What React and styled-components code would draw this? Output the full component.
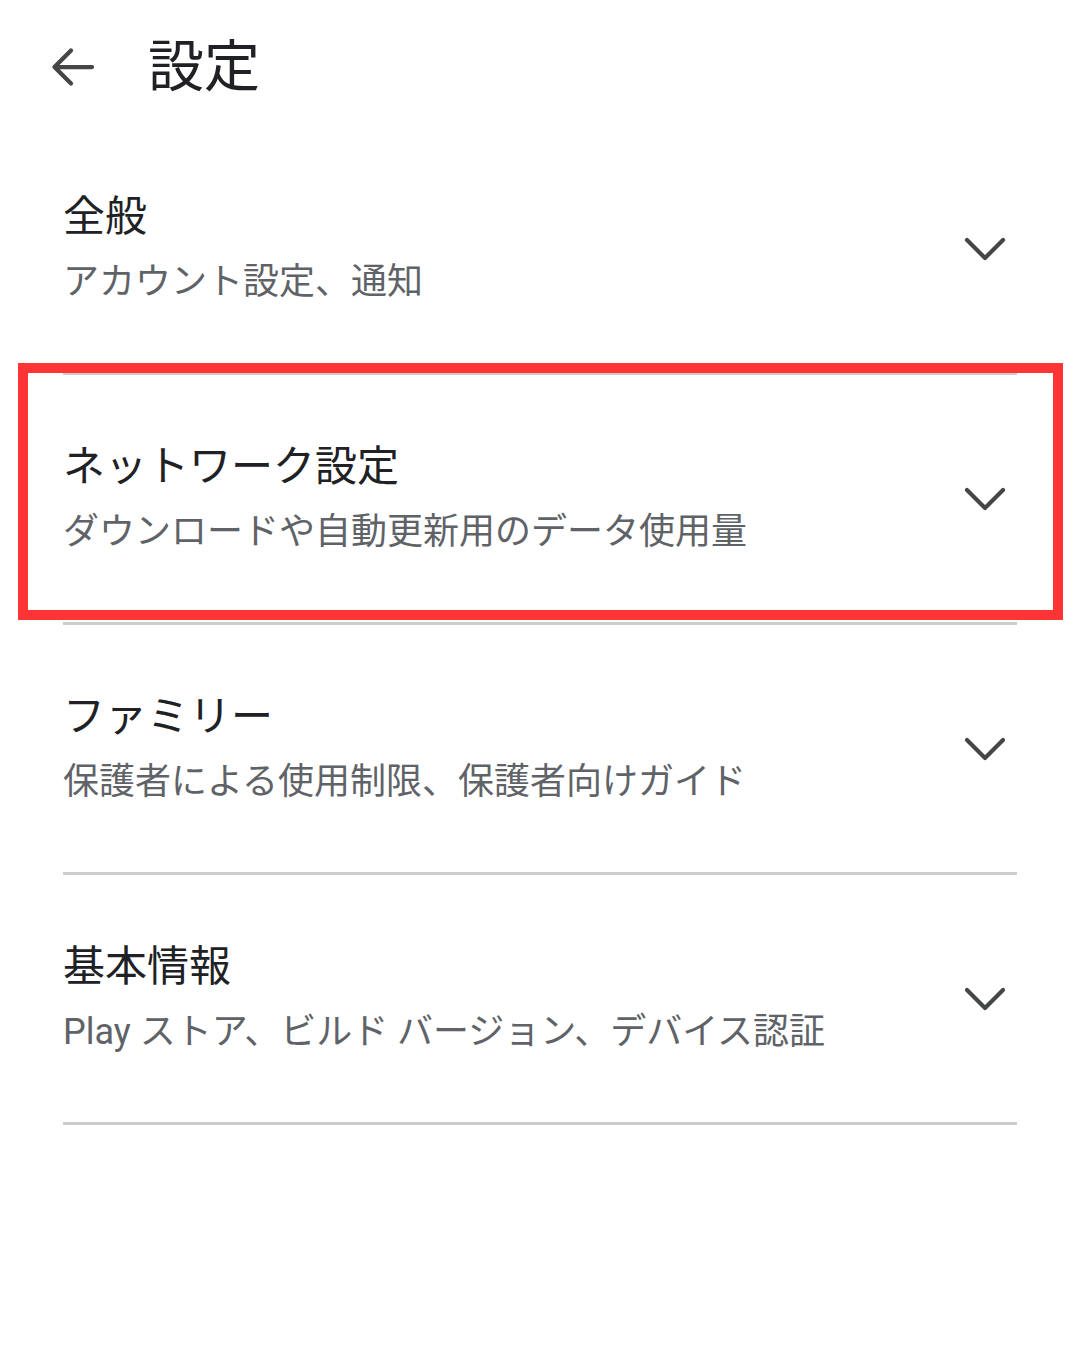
import React from 'react';
import styled, { createGlobalStyle } from 'styled-components';

const GlobalStyle = createGlobalStyle`
  html, body {
    margin: 0;
    padding: 0;
    background: #ffffff;
  }
  body {
    font-family: Roboto, "Noto Sans CJK JP", sans-serif;
    -webkit-font-smoothing: antialiased;
  }
`;

const Page = styled.div`
  width: 1080px;
  min-height: 1350px;
  background: #ffffff;
`;

const Header = styled.header`
  height: 125px;
  box-sizing: border-box;
  padding: 8px 0 0 43px;
  display: flex;
  align-items: center;
`;

const BackButton = styled.button`
  width: 60px;
  height: 60px;
  padding: 0;
  border: none;
  background: none;
  display: flex;
  align-items: center;
  justify-content: center;
  color: #444746;
`;

const Title = styled.h1`
  margin: 0 0 0 45px;
  font-size: 56px;
  font-weight: 400;
  line-height: 1;
  color: #202124;
`;

const List = styled.ul`
  list-style: none;
  margin: 0 63px;
  padding: 0;
`;

const Item = styled.li`
  position: relative;
  height: 250px;
  box-sizing: border-box;
  border-bottom: 3px solid ${props => (props.divider ? '#cdcdcd' : 'transparent')};
  display: flex;
  align-items: center;
  justify-content: space-between;
`;

const Texts = styled.div`
  display: flex;
  flex-direction: column;
  gap: 9px;
  padding-top: 2px;
`;

const ItemTitle = styled.div`
  font-size: 42px;
  line-height: 56px;
  color: #202124;
  white-space: nowrap;
`;

const ItemSub = styled.div`
  font-size: 36px;
  line-height: 56px;
  color: #5f6368;
  white-space: nowrap;
`;

const Chevron = styled.svg`
  width: 44px;
  height: 28px;
  margin-right: 10px;
  flex-shrink: 0;
  color: #444746;
`;

// red annotation frame drawn over the highlighted row
const Highlight = styled.div`
  position: absolute;
  top: -12px;
  bottom: 2px;
  left: -45px;
  right: -46px;
  border: 10px solid #ff3434;
  pointer-events: none;
`;

const sections = [
  { title: '全般', sub: 'アカウント設定、通知', divider: true },
  { title: 'ネットワーク設定', sub: 'ダウンロードや自動更新用のデータ使用量', divider: true, highlight: true },
  { title: 'ファミリー', sub: '保護者による使用制限、保護者向けガイド', divider: true },
  { title: '基本情報', sub: 'Play ストア、ビルド バージョン、デバイス認証', divider: true },
];

const App = () => (
  <Page>
    <GlobalStyle />
    <Header>
      <BackButton aria-label="戻る">
        <svg width="60" height="60" viewBox="0 0 24 24" fill="none">
          <path
            d="M19.6 12H5M11.2 5.4 4.6 12l6.6 6.6"
            stroke="currentColor"
            strokeWidth="1.7"
            strokeLinecap="round"
            strokeLinejoin="round"
          />
        </svg>
      </BackButton>
      <Title>設定</Title>
    </Header>
    <List>
      {sections.map(s => (
        <Item key={s.title} divider={s.divider}>
          <Texts>
            <ItemTitle>{s.title}</ItemTitle>
            <ItemSub>{s.sub}</ItemSub>
          </Texts>
          <Chevron viewBox="0 0 44 28" fill="none">
            <polyline
              points="4,5 22,23 40,5"
              stroke="currentColor"
              strokeWidth="4.2"
              strokeLinecap="round"
              strokeLinejoin="round"
            />
          </Chevron>
          {s.highlight && <Highlight />}
        </Item>
      ))}
    </List>
  </Page>
);

export default App;
